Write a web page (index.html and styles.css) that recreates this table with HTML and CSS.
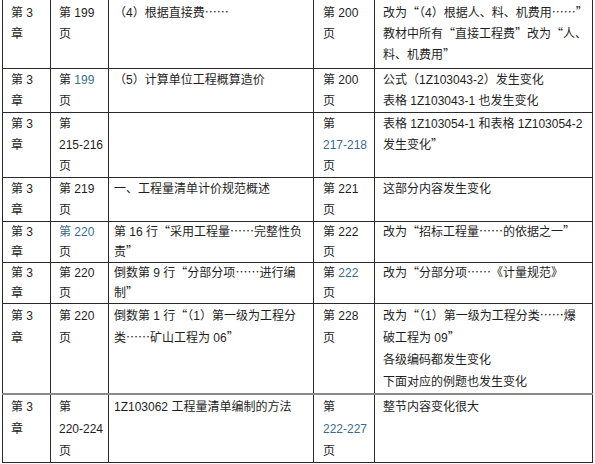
FILE: index.html
```html
<!DOCTYPE html>
<html lang="zh-CN">
<head>
<meta charset="utf-8">
<link rel="stylesheet" href="styles.css">
</head>
<body>
<table class="errata">
  <colgroup>
    <col class="c1"><col class="c2"><col class="c3"><col class="c4"><col class="c5">
  </colgroup>
  <tbody>
    <tr class="r1">
      <td>第 3<br>章</td>
      <td>第 199<br>页</td>
      <td>（4）根据直接费<span class="q">……</span></td>
      <td>第 200<br>页</td>
      <td>改为<span class="q">“</span>（4）根据人、料、机费用<span class="q">……”</span><br>教材中所有<span class="q">“</span>直接工程费<span class="q">”</span>改为<span class="q">“</span>人、<br>料、机费用<span class="q">”</span></td>
    </tr>
    <tr class="r2">
      <td>第 3<br>章</td>
      <td>第 <span class="blue">199</span><br>页</td>
      <td>（5）计算单位工程概算造价</td>
      <td>第 200<br>页</td>
      <td>公式（1Z103043-2）发生变化<br>表格 1Z103043-1 也发生变化</td>
    </tr>
    <tr class="r3">
      <td>第 3<br>章</td>
      <td>第<br>215-216<br>页</td>
      <td></td>
      <td>第<br><span class="blue">217-218</span><br>页</td>
      <td>表格 1Z103054-1 和表格 1Z103054-2<br>发生变化<span class="q">”</span></td>
    </tr>
    <tr class="r4">
      <td>第 3<br>章</td>
      <td>第 219<br>页</td>
      <td>一、工程量清单计价规范概述</td>
      <td>第 221<br>页</td>
      <td>这部分内容发生变化</td>
    </tr>
    <tr class="r5">
      <td>第 3<br>章</td>
      <td><span class="blue">第 220</span><br>页</td>
      <td>第 16 行<span class="q">“</span>采用工程量<span class="q">……</span>完整性负<br>责<span class="q">”</span></td>
      <td>第 222<br>页</td>
      <td>改为<span class="q">“</span>招标工程量<span class="q">……</span>的依据之一<span class="q">”</span></td>
    </tr>
    <tr class="r6">
      <td>第 3<br>章</td>
      <td>第 220<br>页</td>
      <td>倒数第 9 行<span class="q">“</span>分部分项<span class="q">……</span>进行编<br>制<span class="q">”</span></td>
      <td>第 <span class="blue">222</span><br>页</td>
      <td>改为<span class="q">“</span>分部分项<span class="q">……</span>《计量规范》</td>
    </tr>
    <tr class="r7">
      <td>第 3<br>章</td>
      <td>第 220<br>页</td>
      <td>倒数第 1 行<span class="q">“</span>（1）第一级为工程分<br>类<span class="q">……</span>矿山工程为 06<span class="q">”</span></td>
      <td>第 228<br>页</td>
      <td>改为<span class="q">“</span>（1）第一级为工程分类<span class="q">……</span>爆<br>破工程为 09<span class="q">”</span><br>各级编码都发生变化<br>下面对应的例题也发生变化</td>
    </tr>
    <tr class="r8">
      <td>第 3<br>章</td>
      <td>第<br>220-224<br>页</td>
      <td>1Z103062 工程量清单编制的方法</td>
      <td>第<br><span class="blue">222-227</span><br>页</td>
      <td>整节内容变化很大</td>
    </tr>
  </tbody>
</table>
</body>
</html>
```
FILE: styles.css
```css
html, body {
  margin: 0;
  padding: 0;
  background: #ffffff;
}

body {
  font-family: "Liberation Sans", "Noto Sans CJK SC", sans-serif;
  font-size: 12px;
  color: #1e1e1e;
}

.errata {
  border-collapse: collapse;
  table-layout: fixed;
  width: 590px;
  margin: -1px 0 0 2px;
}

.c1 { width: 48px; }
.c2 { width: 58px; }
.c3 { width: 205px; }
.c4 { width: 61px; }
.c5 { width: 218px; }

.errata td {
  border: 1px solid #2a2a2a;
  vertical-align: top;
  line-height: 21px;
  padding: 1px 0 0 8px;
  white-space: nowrap;
  overflow: hidden;
}

.errata td:nth-child(3) { padding-left: 5px; }
.errata td:nth-child(4) { padding-left: 9px; }

.r1 td {
  padding-top: 3px;
  padding-bottom: 2px;
}

.r5 td,
.r6 td {
  line-height: 20px;
  padding-top: 0;
}

.r7 td,
.r8 td { line-height: 22px; }

.r7 td { border-bottom: 2px solid #8a8a8a; }

.q {
  font-family: "Noto Sans CJK SC", sans-serif;
  font-feature-settings: "fwid" 1;
  line-height: 1;
}

.blue { color: #3d6c8e; }
```
